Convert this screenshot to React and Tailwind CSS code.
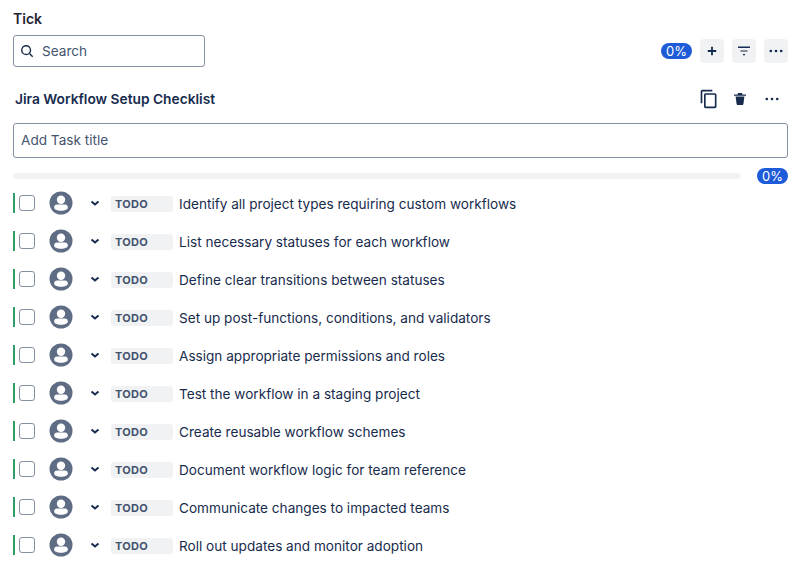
import React from 'react';

const tasks = [
  'Identify all project types requiring custom workflows',
  'List necessary statuses for each workflow',
  'Define clear transitions between statuses',
  'Set up post-functions, conditions, and validators',
  'Assign appropriate permissions and roles',
  'Test the workflow in a staging project',
  'Create reusable workflow schemes',
  'Document workflow logic for team reference',
  'Communicate changes to impacted teams',
  'Roll out updates and monitor adoption',
];

const Percent = () => (
  <span className="flex h-4 w-[31px] items-center justify-center rounded-full bg-[#1d5bd8] text-[13px] leading-4 text-white">0%</span>
);

const Dots = () => (
  <svg width="24" height="24" viewBox="0 0 24 24" fill="#172b4d">
    <circle cx="6.8" cy="12" r="1.35" />
    <circle cx="12" cy="12" r="1.35" />
    <circle cx="17.2" cy="12" r="1.35" />
  </svg>
);

const IconButton = ({ children }) => (
  <div className="flex h-6 w-6 items-center justify-center rounded bg-[#f1f2f4]">{children}</div>
);

const Avatar = () => (
  <svg width="24" height="24" viewBox="0 0 24 24">
    <circle cx="12" cy="12" r="11.5" fill="#5e6c84" />
    <circle cx="12" cy="8.8" r="4.2" fill="#fff" />
    <path d="M5.2 16c0-1.6 1.2-2.6 2.8-2.6h8c1.6 0 2.8 1 2.8 2.6v.8c0 1.6-2.8 3-6.8 3s-6.8-1.4-6.8-3z" fill="#fff" />
  </svg>
);

const TaskRow = ({ title }) => (
  <div className="flex h-[38px] items-center">
    <div className="mb-0.5 h-5 w-0.5 bg-[#2f9e66]" />
    <div className="mb-0.5 ml-1 h-4 w-4 rounded-[3px] border border-[#8590a2] bg-white" />
    <div className="mb-0.5 ml-[14px]"><Avatar /></div>
    <svg className="mb-0.5 ml-[14px]" width="16" height="16" viewBox="0 0 16 16" fill="none" stroke="#172b4d" strokeWidth="2">
      <path d="M4.5 6.5 8 9.5l3.5-3" />
    </svg>
    <div className="ml-2 flex h-4 w-[62px] items-center rounded-[3px] bg-[#f1f2f4] pl-1 text-[11px] font-bold tracking-[0.3px] text-[#44546f]">TODO</div>
    <div className="ml-[6px] text-[13.6px] text-[#172b4d]">{title}</div>
  </div>
);

export default function App() {
  return (
    <div className="h-[576px] w-[809px] overflow-hidden bg-white pl-[13px] pr-[21px] font-['Inter',sans-serif]">
      <div className="pt-[11px] text-sm leading-4 font-semibold text-[#1f2430]">Tick</div>

      <div className="mt-[8px] flex items-center justify-between">
        <div className="flex h-8 w-[192px] items-center rounded-[3px] border border-[#8590a2] pl-1.5 text-[13.6px] text-[#44546f]">
          <svg width="14" height="14" viewBox="0 0 16 16" fill="none" stroke="#172b4d" strokeWidth="1.6">
            <circle cx="7" cy="7" r="5" />
            <path d="m10.8 10.8 3.7 3.7" />
          </svg>
          <span className="ml-2">Search</span>
        </div>
        <div className="flex items-center">
          <Percent />
          <div className="ml-2 flex gap-2">
            <IconButton>
              <svg width="10" height="10" viewBox="0 0 10 10" stroke="#172b4d" strokeWidth="1.8">
                <path d="M5 .8v8.4M.8 5h8.4" />
              </svg>
            </IconButton>
            <IconButton>
              <svg width="14" height="12" viewBox="0 0 14 12" fill="#172b4d">
                <path d="M1 1.6h12v1.5H1zM3.5 5.4h7v1.2h-7zM6 9h2v1.2H6z" />
              </svg>
            </IconButton>
            <IconButton><Dots /></IconButton>
          </div>
        </div>
      </div>

      <div className="mt-5 flex h-6 items-center justify-between pl-0.5">
        <div className="text-[13.75px] font-semibold text-[#172b4d]">Jira Workflow Setup Checklist</div>
        <div className="mr-1 flex items-center">
          <svg width="20" height="20" viewBox="0 0 24 24" fill="#172b4d">
            <path d="M16 1H4c-1.1 0-2 .9-2 2v14h2V3h12V1zm3 4H8c-1.1 0-2 .9-2 2v14c0 1.1.9 2 2 2h11c1.1 0 2-.9 2-2V7c0-1.1-.9-2-2-2zm0 16H8V7h11v14z" />
          </svg>
          <svg className="ml-[13px]" width="16" height="16" viewBox="0 0 16 16" fill="#172b4d">
            <path d="M2 3.4h12v1.3H2zM5.8 2h4.4v1.4H5.8zM3.6 5.6h8.8l-1 7.4c-.1.6-.5 1-1.1 1H5.7c-.6 0-1-.4-1.1-1z" />
          </svg>
          <div className="ml-[12px]"><Dots /></div>
        </div>
      </div>

      <div className="mt-[12px] flex h-[35px] w-[775px] items-center rounded-[3px] border border-[#8590a2] pl-[7px] text-[13.6px] text-[#44546f]">Add Task title</div>

      <div className="mt-[10px] flex items-center justify-between">
        <div className="h-1.5 w-[728px] rounded-full bg-[#f1f2f4]" />
        <Percent />
      </div>

      <div className="mt-[1px]">
        {tasks.map((task) => (
          <TaskRow key={task} title={task} />
        ))}
      </div>
    </div>
  );
}
